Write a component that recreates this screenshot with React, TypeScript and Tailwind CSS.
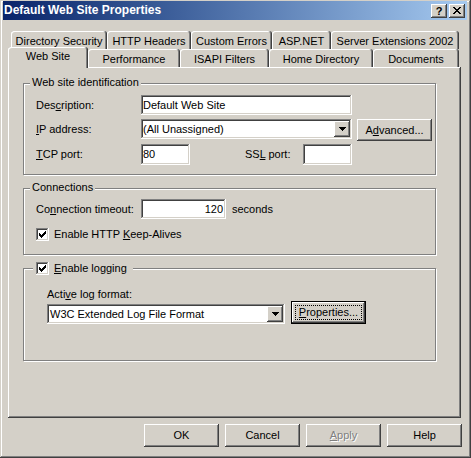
import React from "react";

const raised =
  "shadow-[inset_-1px_-1px_#404040,inset_1px_1px_#ffffff,inset_-2px_-2px_#808080,inset_2px_2px_#d4d0c8]";
const sunken =
  "shadow-[inset_-1px_-1px_#ffffff,inset_1px_1px_#808080,inset_-2px_-2px_#d4d0c8,inset_2px_2px_#404040]";
const tabCls =
  "h-[18px] flex items-center justify-center pt-[2px] rounded-t-[3px] bg-[#d4d0c8] whitespace-nowrap shadow-[inset_-1px_0_#404040,inset_1px_1px_#ffffff,inset_-2px_0_#808080]";
const groupCls =
  "relative ml-[15px] w-[413px] border border-[#808080] shadow-[1px_1px_#ffffff,inset_1px_1px_#ffffff]";

function U({ children }: { children: React.ReactNode }) {
  return <span className="underline underline-offset-[1px]">{children}</span>;
}

function Check() {
  return (
    <div className={`w-[13px] h-[13px] shrink-0 bg-white ${sunken} flex items-center justify-center`}>
      <svg width="7" height="7" viewBox="0 0 7 7" shapeRendering="crispEdges">
        <path
          d="M0 2H1V3H2V4H3V3H4V2H5V1H6V0H7V3H6V4H5V5H4V6H3V7H2V6H1V5H0Z"
          fill="#000"
        />
      </svg>
    </div>
  );
}

function Arrow() {
  return (
    <svg width="7" height="4" viewBox="0 0 7 4" shapeRendering="crispEdges">
      <path d="M0 0H7V1H6V2H5V3H4V4H3V3H2V2H1V1H0Z" fill="#000" />
    </svg>
  );
}

function Button({ children, className }: { children: React.ReactNode; className: string }) {
  return (
    <div className={`${raised} bg-[#d4d0c8] flex items-center justify-center whitespace-nowrap ${className}`}>
      {children}
    </div>
  );
}

export default function App() {
  return (
    <div className="w-[471px] h-[458px] bg-[#d4d0c8] font-['Liberation_Sans',Arial,sans-serif] text-[11px] leading-[13px] text-black flex flex-col overflow-hidden shadow-[inset_-1px_-1px_#404040,inset_1px_1px_#d4d0c8,inset_-2px_-2px_#808080,inset_2px_2px_#ffffff]">
      {/* Title bar */}
      <div className="mt-[1px] ml-[3px] w-[464px] h-[19px] shrink-0 bg-linear-to-r from-[#0a246a] to-[#a6caf0] flex items-center pl-[1px] pr-[2px]">
        <span className="flex-1 text-white font-bold text-[12px] leading-[15px]">
          Default Web Site Properties
        </span>
        <Button className="w-[16px] h-[14px] font-bold text-[11px] leading-[11px] pt-[1px]">?</Button>
        <div className={`w-[16px] h-[14px] ml-[2px] ${raised} bg-[#d4d0c8] flex items-center justify-center`}>
          <svg width="8" height="7" viewBox="0 0 8 7" shapeRendering="crispEdges">
            <path
              d="M0 0h2v1h-2z M6 0h2v1h-2z M1 1h2v1h-2z M5 1h2v1h-2z M2 2h4v1h-4z M3 3h2v1h-2z M2 4h4v1h-4z M1 5h2v1h-2z M5 5h2v1h-2z M0 6h2v1h-2z M6 6h2v1h-2z"
              fill="#000"
            />
          </svg>
        </div>
      </div>

      {/* Tabs */}
      <div className="ml-[8px] mt-[11px] w-[453px] shrink-0">
        <div className="flex h-[18px] ml-[3px]">
          <div className={`${tabCls} w-[96px]`}>Directory Security</div>
          <div className={`${tabCls} w-[84px]`}>HTTP Headers</div>
          <div className={`${tabCls} w-[81px]`}>Custom Errors</div>
          <div className={`${tabCls} w-[59px]`}>ASP.NET</div>
          <div className={`${tabCls} w-[128px]`}>Server Extensions 2002</div>
        </div>
        <div className="flex h-[18px] items-start">
          <div className="relative z-10 w-[80px] h-[21px] -mt-[2px] flex items-center justify-center pb-[2px] rounded-t-[3px] bg-[#d4d0c8] shadow-[inset_-1px_0_#404040,inset_1px_1px_#ffffff,inset_-2px_0_#808080]">
            Web Site
          </div>
          <div className={`${tabCls} w-[92px]`}>Performance</div>
          <div className={`${tabCls} w-[89px]`}>ISAPI Filters</div>
          <div className={`${tabCls} w-[104px]`}>Home Directory</div>
          <div className={`${tabCls} w-[86px]`}>Documents</div>
        </div>
      </div>

      {/* Panel */}
      <div className="ml-[8px] w-[453px] h-[351px] shrink-0 flex flex-col shadow-[inset_-1px_-1px_#404040,inset_1px_1px_#ffffff,inset_-2px_-2px_#808080]">
        {/* Web site identification */}
        <div className={`${groupCls} mt-[16px] h-[92px] pt-[11px] pl-[12px]`}>
          <div className="absolute left-[6px] top-[-8px] px-[2px] bg-[#d4d0c8] whitespace-nowrap">
            Web site identification
          </div>
          <div className="flex h-[20px]">
            <div className="w-[105px] flex items-center">
              Des<U>c</U>ription:
            </div>
            <div className={`w-[211px] h-[20px] bg-white ${sunken} flex items-center pl-[2px]`}>
              Default Web Site
            </div>
          </div>
          <div className="flex h-[20px] items-start mt-[4px]">
            <div className="w-[105px] h-[20px] flex items-center">
              <U>I</U>P address:
            </div>
            <div className={`w-[211px] h-[20px] bg-white ${sunken} flex items-center p-[2px]`}>
              <span className="flex-1 pl-[0px]">(All Unassigned)</span>
              <div className={`w-[16px] h-[16px] ${raised} bg-[#d4d0c8] flex items-center justify-center`}>
                <Arrow />
              </div>
            </div>
            <Button className="ml-[5px] w-[75px] h-[22px]">
              A<U>d</U>vanced...
            </Button>
          </div>
          <div className="flex h-[21px] items-center mt-[5px]">
            <div className="w-[105px]">
              <U>T</U>CP port:
            </div>
            <div className={`w-[49px] h-[21px] bg-white ${sunken} flex items-center pl-[2px]`}>80</div>
            <div className="ml-[55px] w-[58px]">
              SS<U>L</U> port:
            </div>
            <div className={`w-[49px] h-[21px] bg-white ${sunken}`}></div>
          </div>
        </div>

        {/* Connections */}
        <div className={`${groupCls} mt-[13px] h-[67px] pt-[10px] pl-[12px]`}>
          <div className="absolute left-[6px] top-[-8px] px-[2px] bg-[#d4d0c8] whitespace-nowrap">
            Connections
          </div>
          <div className="flex h-[20px] items-center">
            <div className="w-[105px]">
              Co<U>n</U>nection timeout:
            </div>
            <div className={`w-[85px] h-[20px] bg-white ${sunken} flex items-center justify-end pr-[3px]`}>
              120
            </div>
            <div className="ml-[6px]">seconds</div>
          </div>
          <div className="flex h-[13px] items-center mt-[9px]">
            <Check />
            <span className="ml-[5px]">
              Enable HTTP <U>K</U>eep-Alives
            </span>
          </div>
        </div>

        {/* Logging */}
        <div className={`${groupCls} mt-[13px] h-[93px] pt-[19px] pl-[23px]`}>
          <div className="absolute left-[9px] top-[-7px] h-[13px] pl-[3px] pr-[6px] bg-[#d4d0c8] flex items-center whitespace-nowrap">
            <Check />
            <span className="ml-[5px]">
              <U>E</U>nable logging
            </span>
          </div>
          <div>
            Acti<U>v</U>e log format:
          </div>
          <div className="flex h-[20px] items-start mt-[3px]">
            <div className={`w-[238px] h-[20px] bg-white ${sunken} flex items-center p-[2px]`}>
              <span className="flex-1 pl-[1px]">W3C Extended Log File Format</span>
              <div className={`w-[16px] h-[16px] ${raised} bg-[#d4d0c8] flex items-center justify-center`}>
                <Arrow />
              </div>
            </div>
            <div className="ml-[6px] -mt-[3px] w-[75px] h-[23px] border border-black flex">
              <div className={`flex-1 ${raised} bg-[#d4d0c8] p-[3px] flex`}>
                <div className="flex-1 border border-dotted border-black flex items-center justify-center">
                  <span>
                    <U>P</U>roperties...
                  </span>
                </div>
              </div>
            </div>
          </div>
        </div>
      </div>

      {/* Bottom buttons */}
      <div className="flex justify-end gap-[6px] mt-[6px] pr-[9px] shrink-0">
        <Button className="w-[75px] h-[23px]">OK</Button>
        <Button className="w-[75px] h-[23px]">Cancel</Button>
        <Button className="w-[75px] h-[23px] text-[#808080] [text-shadow:1px_1px_0_#ffffff]">
          <U>A</U>pply
        </Button>
        <Button className="w-[75px] h-[23px]">Help</Button>
      </div>
    </div>
  );
}
